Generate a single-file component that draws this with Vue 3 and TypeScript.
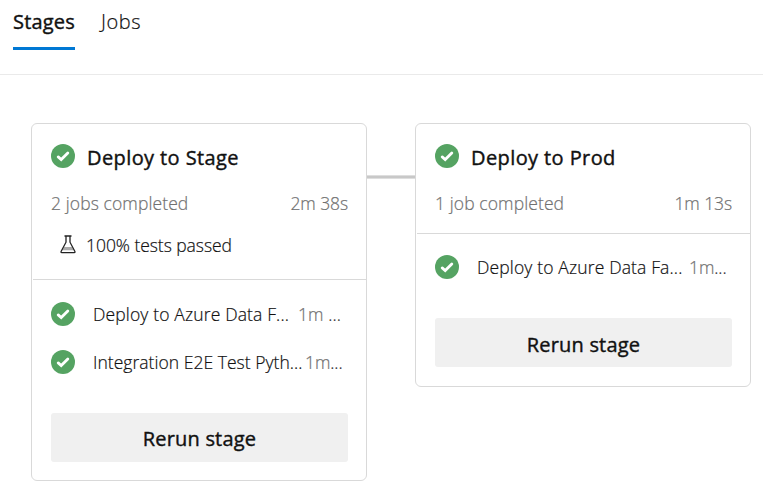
<script setup lang="ts">
interface Job {
  name: string
  time: string
  kind: string
}

interface Stage {
  name: string
  summary: string
  duration: string
  tests?: string
  jobs: Job[]
}

const stages: Stage[] = [
  {
    name: 'Deploy to Stage',
    summary: '2 jobs completed',
    duration: '2m 38s',
    tests: '100% tests passed',
    jobs: [
      { name: 'Deploy to Azure Data F...', time: '1m ', kind: 'deploy' },
      { name: 'Integration E2E Test Pyth...', time: '1m', kind: 'integration' },
    ],
  },
  {
    name: 'Deploy to Prod',
    summary: '1 job completed',
    duration: '1m 13s',
    jobs: [{ name: 'Deploy to Azure Data Fa...', time: '1m', kind: 'prod' }],
  },
]
</script>

<template>
  <div class="page">
    <nav class="tabs">
      <a class="tab active"><span>Stages</span></a>
      <a class="tab"><span>Jobs</span></a>
    </nav>
    <main class="stages">
      <template v-for="(stage, i) in stages" :key="stage.name">
        <div v-if="i > 0" class="connector"></div>
        <section class="card">
          <header class="head">
            <div class="title">
              <svg class="check" viewBox="0 0 24 24">
                <circle cx="12" cy="12" r="12" />
                <path d="M7.2 12.9l3 2.6L16.8 9" />
              </svg>
              <h2>{{ stage.name }}</h2>
            </div>
            <div class="summary">
              <span>{{ stage.summary }}</span>
              <span class="duration">{{ stage.duration }}</span>
            </div>
            <div v-if="stage.tests" class="tests">
              <svg class="flask" viewBox="0 0 16 19">
                <path class="liquid" d="M4 12h8l1.6 3.2H2.4z" />
                <path class="glass" d="M4.5 1h7M6 1v6.2L1.2 16.2Q.5 17.6 1.8 17.6h12.4q1.3 0 .6-1.4L10 7.2V1" />
              </svg>
              <span>{{ stage.tests }}</span>
            </div>
          </header>
          <ul class="jobs">
            <li v-for="job in stage.jobs" :key="job.name" :class="job.kind">
              <svg class="check" viewBox="0 0 24 24">
                <circle cx="12" cy="12" r="12" />
                <path d="M7.2 12.9l3 2.6L16.8 9" />
              </svg>
              <span class="job-name">{{ job.name }}</span>
              <span class="job-time">{{ job.time }}<span class="dots">...</span></span>
            </li>
          </ul>
          <button class="rerun" type="button">Rerun stage</button>
        </section>
      </template>
    </main>
  </div>
</template>

<style>
body {
  background: #fff;
}
</style>

<style scoped>
.page {
  width: 763px;
  height: 494px;
  overflow: hidden;
  box-sizing: border-box;
  background: #fff;
  color: #111;
  font-family: 'Open Sans', 'Noto Sans', sans-serif;
  font-size: 17.5px;
  font-weight: 350;
  letter-spacing: 0.1px;
  line-height: 24px;
  white-space: pre;
  -webkit-text-stroke: 0.2px currentColor;
}
.tabs {
  display: flex;
  gap: 26px;
  height: 74px;
  padding-left: 13px;
  border-bottom: 1px solid #eaeaea;
}
.tab {
  box-sizing: border-box;
  height: 50px;
  padding-top: 10px;
  font-size: 20px;
  letter-spacing: 0.6px;
}
.active {
  width: 62px;
  border-bottom: 3px solid #0078d4;
  font-weight: 500;
  letter-spacing: 0.2px;
  -webkit-text-stroke-width: 0.4px;
}
.stages {
  display: flex;
  align-items: flex-start;
  padding: 48px 0 0 31px;
}
.card {
  box-sizing: border-box;
  width: 336px;
  padding-bottom: 18px;
  border: 1px solid #d9d9d9;
  border-radius: 6px;
}
.card:last-child {
  padding-bottom: 19px;
}
.connector {
  box-sizing: border-box;
  width: 48px;
  height: 4px;
  margin-top: 52px;
  border: solid #dedede;
  border-width: 1px 0;
  background: #c8c8c8;
}
.head {
  margin-left: 1px;
  padding: 20px 18px 17px;
  border-bottom: 1px solid #d9d9d9;
}
.title {
  display: flex;
  gap: 12px;
  height: 24px;
}
h2 {
  margin: 0;
  padding-top: 2px;
  font-size: 20px;
  font-weight: 500;
  letter-spacing: 0.4px;
  line-height: 24px;
  -webkit-text-stroke-width: 0.4px;
}
.check {
  flex: none;
  width: 24px;
  height: 24px;
  fill: #55a362;
}
.check path {
  fill: none;
  stroke: #fff;
  stroke-width: 2.8;
  stroke-linecap: round;
}
.summary {
  display: flex;
  justify-content: space-between;
  margin: 23px 0 1px;
  color: #707070;
}
.duration {
  letter-spacing: -0.1px;
}
.tests {
  display: flex;
  align-items: center;
  gap: 10px;
  margin: 18px 0 5px 9px;
  letter-spacing: -0.05px;
}
.flask {
  width: 16px;
  height: 19px;
  margin-top: -2px;
}
.glass {
  fill: none;
  stroke: #222;
  stroke-width: 1.3;
}
.liquid {
  fill: #aaa;
}
.jobs {
  display: flex;
  flex-direction: column;
  gap: 24px;
  margin: 0;
  padding: 21px 0 0 19px;
  list-style: none;
}
.card:first-child .jobs {
  padding-top: 22px;
}
.jobs li {
  display: flex;
  height: 24px;
}
.job-name {
  width: 205px;
  margin-left: 18px;
  letter-spacing: 0.15px;
}
.job-time {
  color: #707070;
}
.integration .job-name {
  width: 212px;
  letter-spacing: 0.03px;
}
.prod .job-name {
  width: 212px;
}
.prod .job-time,
.integration .job-time {
  letter-spacing: -0.1px;
}
.dots {
  color: #333;
}
.rerun {
  display: block;
  width: 297px;
  height: 49px;
  margin: 39px 0 0 19px;
  padding: 3px 0 0;
  border: 0;
  border-radius: 3px;
  background: #f0f0f0;
  color: #111;
  font: 500 20px/24px 'Open Sans', 'Noto Sans', sans-serif;
  letter-spacing: 0.2px;
  -webkit-text-stroke: 0.4px currentColor;
}
.card:last-child .rerun {
  padding-top: 5px;
}
</style>
